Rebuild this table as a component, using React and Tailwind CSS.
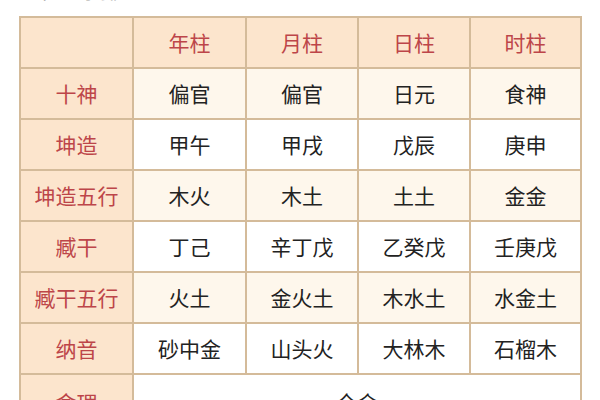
import React from 'react';

const cols = ['年柱', '月柱', '日柱', '时柱'];

const rows = [
  { label: '十神', cells: ['偏官', '偏官', '日元', '食神'] },
  { label: '坤造', cells: ['甲午', '甲戌', '戊辰', '庚申'] },
  { label: '坤造五行', cells: ['木火', '木土', '土土', '金金'] },
  { label: '臧干', cells: ['丁己', '辛丁戊', '乙癸戊', '壬庚戊'] },
  { label: '臧干五行', cells: ['火土', '金火土', '木水土', '水金土'] },
  { label: '纳音', cells: ['砂中金', '山头火', '大林木', '石榴木'] },
];

const font = { fontFamily: '"Noto Sans CJK SC", "Noto Sans", sans-serif' };

const App = () => {
  return (
    <div className="w-[600px] h-[400px] overflow-hidden bg-white" style={font}>
      <div className="h-[16px] overflow-hidden pl-[20px]">
        <div className="-mt-[21px] text-[20px] leading-[24px] text-[#a0a0a0]">四柱八字排盘</div>
      </div>
      <table className="ml-[19px] border-collapse table-fixed w-[561px] text-[21px]">
        <colgroup>
          <col className="w-[113px]" />
          <col className="w-[113px]" />
          <col className="w-[112px]" />
          <col className="w-[112px]" />
          <col className="w-[111px]" />
        </colgroup>
        <thead>
          <tr className="h-[51px] bg-[#fce5cd]">
            <th className="border-2 border-[#d4bb9a]"></th>
            {cols.map((c) => (
              <th key={c} className="border-2 border-[#d4bb9a] font-normal text-[#bd4549]">
                {c}
              </th>
            ))}
          </tr>
        </thead>
        <tbody>
          {rows.map((r, i) => (
            <tr key={r.label} className="h-[51px]">
              <td className="border-2 border-[#d4bb9a] bg-[#fce5cd] text-center text-[#bd4549]">
                {r.label}
              </td>
              {r.cells.map((c, j) => (
                <td
                  key={j}
                  className={
                    'border-2 border-[#d4bb9a] text-center text-[#222] ' +
                    (i % 2 === 0 ? 'bg-[#fef7ec]' : 'bg-white')
                  }
                >
                  {c}
                </td>
              ))}
            </tr>
          ))}
          <tr className="h-[51px]">
            <td className="border-2 border-[#d4bb9a] bg-[#fce5cd] text-center text-[#bd4549] align-top pt-[12px]">
              命理
            </td>
            <td colSpan={4} className="border-2 border-[#d4bb9a] bg-white text-center text-[#222] align-top pt-[12px]">
              全金
            </td>
          </tr>
        </tbody>
      </table>
    </div>
  );
};

export default App;
